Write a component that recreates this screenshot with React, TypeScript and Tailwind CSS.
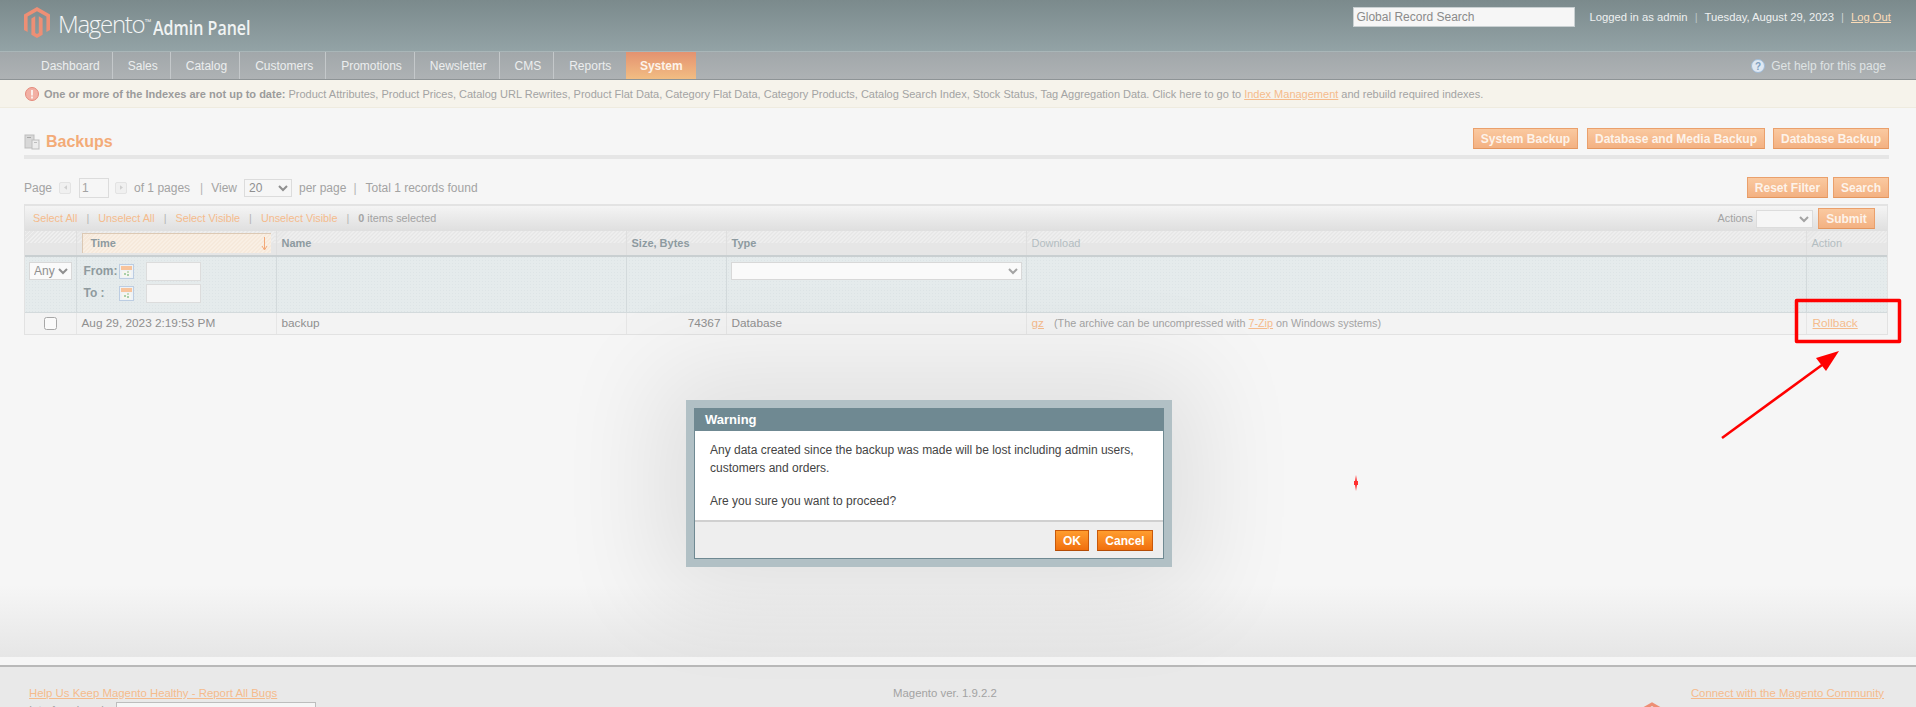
import React from 'react';

const NAV = ['Dashboard', 'Sales', 'Catalog', 'Customers', 'Promotions', 'Newsletter', 'CMS', 'Reports'];

const Logo = ({ className }: { className: string }) => (
  <svg viewBox="0 0 26 31" className={className}>
    <path
      fill="#ee8f75"
      d="M13 0 26 7.500V23l-3.600 2.100V9.600L13 4.200 3.600 9.600v15.500L0 23V7.500ZM11.200 9.300v16.600L13 27l1.800-1.100V9.300L18.600 11.500V27.800L13 31 7.400 27.800V11.500Z"
    />
  </svg>
);

const OrangeButton = ({ children, className = '' }: { children: React.ReactNode; className?: string }) => (
  <button className={`h-[21px] text-[12px] font-bold text-[#fdf3ea] border border-[#eaa06c] border-b-[#e3965f] bg-gradient-to-b from-[#fac9a0] to-[#f3b182] ${className}`}>
    {children}
  </button>
);

const CalendarIcon = () => (
  <svg viewBox="0 0 15 15" className="w-[15px] h-[15px] shrink-0">
    <rect x="0.500" y="0.500" width="14" height="14" fill="#eef2f6" stroke="#bccde2" />
    <rect x="2" y="2" width="11" height="4" fill="#f8c49c" />
    <rect x="3" y="7" width="9" height="6" fill="#f6f6f0" />
    <rect x="5" y="9" width="2" height="2" fill="#a9cfa9" />
    <rect x="8" y="7" width="2" height="2" fill="#c3dcbc" />
    <rect x="8" y="10" width="2" height="2" fill="#a9cfa9" />
  </svg>
);

const PagerArrow = ({ dir }: { dir: 'left' | 'right' }) => (
  <span className="w-[12px] h-[12px] flex items-center justify-center bg-[#f0f0f0] border border-[#e3e3e3] rounded-[2px]">
    <svg viewBox="0 0 4 6" className="w-[3px] h-[5px]">
      <path fill="#cfcfcf" d={dir === 'left' ? 'M4 0v6L0 3Z' : 'M0 0v6l4-3Z'} />
    </svg>
  </span>
);

const Sep = () => <span className="text-[#b4b4b4]">|</span>;

const Link = ({ children }: { children: React.ReactNode }) => (
  <a className="text-[#f5bb8c] underline">{children}</a>
);

const headCell = 'relative h-[25px] px-[5px] text-left text-[11px] font-bold border-r border-[#dfdfdf] last:border-r-0 bg-[linear-gradient(to_bottom,transparent_12px,#e6e6e6_12px),repeating-linear-gradient(135deg,#efefef_0,#efefef_1.41px,#e6e6e6_1.41px,#e6e6e6_2.83px)]';
const filterCell = 'align-top border-r border-[#d3dadc] last:border-r-0';
const rowCell = 'h-[22px] px-[5px] pt-[1px] text-[11.8px] border-r border-[#e6e6e6] last:border-r-0';

export default function App() {
  return (
    <div className="relative h-[707px] w-full overflow-hidden bg-[#f6f6f6] font-['Liberation_Sans',Arial,sans-serif] text-[12px] text-[#a3a3a3]">
      {/* header */}
      <header className="h-[52px] flex justify-between bg-gradient-to-b from-[#7b8a8c] to-[#93a3a6] border-b border-[#a9b6b8] pl-[24px] pr-[25px]">
        <div className="flex items-start pt-[7px]">
          <Logo className="w-[26px] h-[31px]" />
          <span className="ml-[8px] mt-[2px] font-['Open_Sans',sans-serif] font-light text-[24px] leading-[30px] tracking-[-1.300px] text-[#f4f6f6]">Magento</span>
          <span className="text-[7px] text-[#f4f6f6] mt-[11px] leading-none">™</span>
          <span className="ml-[2px] mt-[8px] origin-left scale-x-[.8] font-['Open_Sans',sans-serif] font-semibold text-[20px] leading-[26px] text-[#f0f3f3] whitespace-nowrap">Admin Panel</span>
        </div>
        <div className="flex items-start pt-[7px]">
          <input
            readOnly
            value="Global Record Search"
            className="w-[222px] h-[20px] px-[2px] bg-[#f6f6f6] border border-[#c9d0d2] text-[12px] text-[#8a8a8a] outline-none"
          />
          <div className="ml-[14px] h-[20px] flex items-center gap-[7px] text-[11.250px] text-[#eef0f0] whitespace-nowrap">
            <span>Logged in as admin</span>
            <span className="text-[#b9c3c5]">|</span>
            <span>Tuesday, August 29, 2023</span>
            <span className="text-[#c9d0d0]">|</span>
            <a className="text-[#fbdcb8] underline">Log Out</a>
          </div>
        </div>
      </header>

      {/* nav */}
      <nav className="h-[28px] flex justify-between pl-[26px] pr-[30px] bg-gradient-to-b from-[#a1a7aa] to-[#aeb2b4] border-b border-[#8e9496] text-[12px] text-[#eceeee]">
        <ul className="flex">
          {NAV.map((item, i) => (
            <li key={item} className={`h-[27px] flex items-center pl-[15px] ${i < NAV.length - 1 ? 'pr-[12px] border-r border-[#c4c8ca]' : 'pr-[15px]'}`}>
              {item}
            </li>
          ))}
          <li className="h-[27px] w-[70px] flex items-center justify-center font-bold text-[#fdf3ea] bg-gradient-to-b from-[#e39270] to-[#f2bd83]">
            System
          </li>
        </ul>
        <div className="flex items-center gap-[6px]">
          <svg viewBox="0 0 14 14" className="w-[14px] h-[14px]">
            <circle cx="7" cy="7" r="6.500" fill="#dfe8f2" stroke="#9fbbd8" />
            <text x="7" y="10.500" textAnchor="middle" fontSize="10" fontWeight="700" fill="#7f9fc0">?</text>
          </svg>
          <span className="text-[#dfe3e4]">Get help for this page</span>
        </div>
      </nav>

      {/* index notice */}
      <div className="h-[28px] flex items-center pl-[25px] pt-[1px] gap-[5px] bg-[#f6f3eb] border-b border-[#efebdf] text-[11px] whitespace-nowrap">
        <svg viewBox="0 0 14 14" className="w-[14px] h-[14px] shrink-0">
          <circle cx="7" cy="7" r="6.500" fill="#f2b0a4" stroke="#e4897b" />
          <rect x="6" y="3" width="2" height="5.500" fill="#fbeeea" />
          <rect x="6" y="9.500" width="2" height="2" fill="#fbeeea" />
        </svg>
        <p>
          <b className="text-[#9b9b9b]">One or more of the Indexes are not up to date:</b>{' '}
          Product Attributes, Product Prices, Catalog URL Rewrites, Product Flat Data, Category Flat Data, Category Products, Catalog Search Index, Stock Status, Tag Aggregation Data. Click here to go to{' '}
          <Link>Index Management</Link> and rebuild required indexes.
        </p>
      </div>

      {/* content */}
      <main className="h-[549px] pl-[24px] pr-[27px] pt-[20px] bg-[linear-gradient(to_top,#e6e6e6,#f6f6f6_72px)]">
        <div className="flex justify-between items-center h-[21px]">
          <div className="mt-[6px] flex items-center gap-[6px]">
            <svg viewBox="0 0 16 16" className="w-[16px] h-[16px]">
              <rect x="1" y="1" width="9" height="13" fill="#d8d8d8" stroke="#bdbdbd" />
              <rect x="8" y="6" width="7" height="9" fill="#ececec" stroke="#bdbdbd" />
              <rect x="3" y="3" width="4" height="1" fill="#a8a8a8" />
              <rect x="10" y="8" width="3" height="1" fill="#bdbdbd" />
            </svg>
            <h3 className="text-[16px] font-bold text-[#f3ab78]">Backups</h3>
          </div>
          <div className="flex">
            <OrangeButton className="w-[105px]">System Backup</OrangeButton>
            <OrangeButton className="ml-[9px] w-[178px]">Database and Media Backup</OrangeButton>
            <OrangeButton className="ml-[8px] w-[116px]">Database Backup</OrangeButton>
          </div>
        </div>
        <div className="h-[4px] mt-[6px] bg-[#e6e6e6]" />

        {/* pager */}
        <div className="mt-[18px] h-[21px] flex justify-between items-center">
          <div className="flex items-center">
            <span>Page</span>
            <span className="ml-[7px]"><PagerArrow dir="left" /></span>
            <input readOnly value="1" className="ml-[8px] w-[30px] h-[20px] px-[2px] border border-[#dcdcdc] bg-[#f6f6f6] text-[12px] outline-none" />
            <span className="ml-[6px]"><PagerArrow dir="right" /></span>
            <span className="ml-[7px]">of 1 pages</span>
            <span className="ml-[10px]"><Sep /></span>
            <span className="ml-[8px]">View</span>
            <select defaultValue="20" className="ml-[7px] w-[48px] h-[18px] border border-[#dcdcdc] bg-[#f6f6f6] text-[12px] text-[#8f8f8f]">
              <option>20</option>
            </select>
            <span className="ml-[7px]">per page</span>
            <span className="ml-[7px]"><Sep /></span>
            <span className="ml-[9px]">Total 1 records found</span>
          </div>
          <div className="flex gap-[5px]">
            <OrangeButton className="w-[81px]">Reset Filter</OrangeButton>
            <OrangeButton className="w-[56px]">Search</OrangeButton>
          </div>
        </div>

        {/* grid */}
        <div className="mt-[6px] w-[1864px] border border-t-0 border-[#e2e2e2]">
          <div className="h-[27px] flex justify-between items-center pl-[8px] pr-[12px] border-t-2 border-[#e3e3e3] bg-gradient-to-b from-[#f4f4f4] to-[#dfdfdf] text-[10.800px]">
            <div className="flex gap-[9px] items-center text-[#f5bb8c]">
              <a>Select All</a>
              <Sep />
              <a>Unselect All</a>
              <Sep />
              <a>Select Visible</a>
              <Sep />
              <a>Unselect Visible</a>
              <Sep />
              <span className="text-[#a3a3a3]"><b>0</b> items selected</span>
            </div>
            <div className="flex items-center">
              <span className="text-[#a3a3a3]">Actions</span>
              <select className="ml-[3px] w-[57px] h-[18px] border border-[#dcdcdc] bg-[#f6f6f6]" />
              <OrangeButton className="ml-[5px] w-[57px]">Submit</OrangeButton>
            </div>
          </div>
          <table className="w-full table-fixed border-collapse">
            <colgroup>
              <col className="w-[51px]" />
              <col className="w-[200px]" />
              <col className="w-[350px]" />
              <col className="w-[100px]" />
              <col className="w-[300px]" />
              <col />
              <col className="w-[81px]" />
            </colgroup>
            <thead>
              <tr className="border-b-2 border-[#c9cfd1]">
                <th className={headCell} />
                <th className={headCell}>
                  <span className="absolute inset-x-[5px] top-[2px] bottom-[2px] flex items-center justify-between pl-[8px] pr-[3px] border-l border-t border-[#dcc9b4] text-[#8d9aa0] bg-[repeating-linear-gradient(135deg,#f9efe4_0,#f9efe4_1.41px,#f6e9db_1.41px,#f6e9db_2.83px)]">
                    Time
                    <svg viewBox="0 0 7 14" className="w-[7px] h-[14px]">
                      <path d="M3.500 0v12M1 9l2.500 4L6 9" stroke="#f3a877" strokeWidth="1" fill="none" />
                    </svg>
                  </span>
                </th>
                <th className={`${headCell} text-[#8d9aa0]`}>Name</th>
                <th className={`${headCell} text-[#8d9aa0]`}>Size, Bytes</th>
                <th className={`${headCell} text-[#8d9aa0]`}>Type</th>
                <th className={`${headCell} text-[#b3bdc1] font-normal`}>Download</th>
                <th className={`${headCell} text-[#b3bdc1] font-normal`}>Action</th>
              </tr>
            </thead>
            <tbody>
              <tr className="h-[56px] bg-[#e5ebec] bg-[radial-gradient(#dde4e6_1px,transparent_1px)] bg-[length:3px_3px] border-b border-[#d3dadc]">
                <td className={`${filterCell} px-[4px] pt-[5px]`}>
                  <select className="w-[43px] h-[18px] bg-[#fafafa] border border-[#d8d8d8] text-[12px] text-[#8f8f8f]">
                    <option>Any</option>
                  </select>
                </td>
                <td className={`${filterCell} pl-[7px] pt-[4px]`}>
                  <div className="flex items-center h-[20px] font-bold text-[#8f9a9e]">
                    <span className="w-[35px]">From:</span>
                    <CalendarIcon />
                    <input readOnly className="ml-[12px] w-[55px] h-[19px] bg-[#f6f6f6] border border-[#dcdcdc]" />
                  </div>
                  <div className="flex items-center h-[20px] mt-[2px] font-bold text-[#8f9a9e]">
                    <span className="w-[35px]">To :</span>
                    <CalendarIcon />
                    <input readOnly className="ml-[12px] w-[55px] h-[19px] bg-[#f6f6f6] border border-[#dcdcdc]" />
                  </div>
                </td>
                <td className={filterCell} />
                <td className={filterCell} />
                <td className={`${filterCell} px-[4px] pt-[5px]`}>
                  <select className="w-full h-[18px] bg-[#fafafa] border border-[#d8d8d8]" />
                </td>
                <td className={filterCell} />
                <td className={filterCell} />
              </tr>
              <tr className="bg-[#f3f3f3] text-[#8f8f8f]">
                <td className={`${rowCell} text-center`}>
                  <input type="checkbox" readOnly className="align-middle w-[13px] h-[13px] opacity-60" />
                </td>
                <td className={rowCell}>Aug 29, 2023 2:19:53 PM</td>
                <td className={rowCell}>backup</td>
                <td className={`${rowCell} text-right`}>74367</td>
                <td className={rowCell}>Database</td>
                <td className={rowCell}>
                  <Link>gz</Link>
                  <span className="ml-[10px] text-[10.800px] text-[#a3a3a3]">(The archive can be uncompressed with <Link>7-Zip</Link> on Windows systems)</span>
                </td>
                <td className={`${rowCell} pl-[6px]`}><Link>Rollback</Link></td>
              </tr>
            </tbody>
          </table>
        </div>
      </main>

      {/* footer */}
      <div className="h-[8px] bg-[#f6f6f6]" />
      <footer className="h-[60px] relative flex justify-between border-t-2 border-[#b9b9b9] bg-[#e9e9e9] pl-[29px] pr-[32px] pt-[18px] leading-[16px] text-[11.400px]">
        <div>
          <Link>Help Us Keep Magento Healthy - Report All Bugs</Link>
          <div className="mt-[1px] flex items-start">
            <span className="w-[87px]">Interface Locale:</span>
            <select className="w-[200px] h-[20px] bg-[#f6f6f6] border border-[#bdbdbd] text-[12px] text-[#777]">
              <option>English (United States) / English</option>
            </select>
          </div>
        </div>
        <span className="absolute left-[893px]">Magento ver. 1.9.2.2</span>
        <Link>Connect with the Magento Community</Link>
        <Logo className="absolute left-[1640px] top-[35px] w-[24px] h-[29px]" />
      </footer>

      {/* dialog, sits over the faded page */}
      <div className="absolute left-[686px] top-[400px] w-[486px] h-[167px] p-[8px] bg-[#b1c0c5] shadow-[0_0_100px_30px_rgba(0,0,0,0.09)]">
        <div className="h-full flex flex-col border border-[#6f8992] bg-white">
          <div className="h-[22px] flex items-center px-[10px] bg-[#6f8992] text-[13px] font-bold text-white">Warning</div>
          <div className="flex-1 pl-[15px] pr-[20px] pt-[10px] text-[12px] leading-[18px] text-[#444]">
            <p>Any data created since the backup was made will be lost including admin users, customers and orders.</p>
            <p className="mt-[15px]">Are you sure you want to proceed?</p>
          </div>
          <div className="h-[38px] flex justify-end items-start gap-[8px] pt-[8px] pr-[10px] bg-[#eeeeee] border-t-2 border-[#d0d0d0]">
            <button className="w-[34px] h-[21px] text-[12px] font-bold text-white border border-[#c9590a] border-b-[#b34c06] bg-gradient-to-b from-[#ff9d2e] to-[#f06f0c]">OK</button>
            <button className="w-[56px] h-[21px] text-[12px] font-bold text-white border border-[#c9590a] border-b-[#b34c06] bg-gradient-to-b from-[#ff9d2e] to-[#f06f0c]">Cancel</button>
          </div>
        </div>
      </div>

      {/* red annotation drawn on the screenshot */}
      <svg className="absolute inset-0 w-full h-full pointer-events-none" viewBox="0 0 1916 707">
        <rect x="1796.500" y="300.500" width="103" height="41" fill="none" stroke="#ff0000" strokeWidth="3.500" strokeLinejoin="round" />
        <path d="M1722 438 1822 365" stroke="#ff0000" strokeWidth="2.500" fill="none" />
        <path d="M1839 351 1816 358 1826 371Z" fill="#ff0000" />
        <path d="M1356 475 1357 481H1358V485H1357L1356 491 1355 485H1354V481H1355Z" fill="#ff3030" />
      </svg>
    </div>
  );
}
